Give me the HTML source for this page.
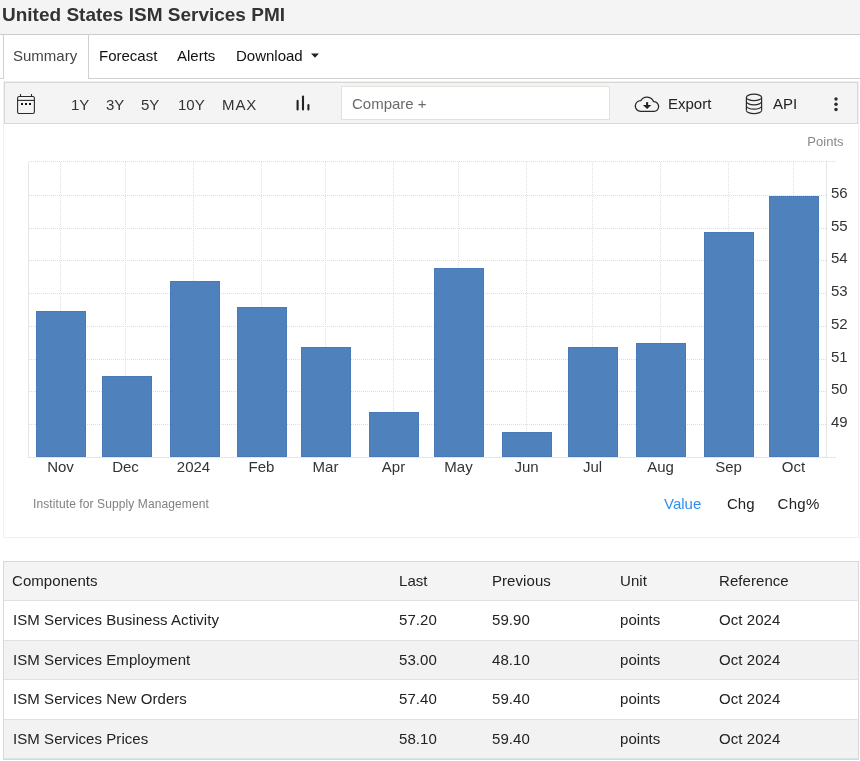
<!DOCTYPE html>
<html><head><meta charset="utf-8">
<style>
*{box-sizing:border-box;margin:0;padding:0}
html,body{width:860px;height:761px;overflow:hidden;background:#fff;-webkit-font-smoothing:antialiased;font-family:"Liberation Sans",sans-serif;color:#222}
.a{position:absolute;white-space:nowrap;line-height:normal;will-change:transform}
#hdr{position:absolute;left:0;top:0;width:860px;height:35px;background:#f4f4f4;border-bottom:1px solid #cccccc}
#title{left:2px;top:4px;font-size:19px;font-weight:bold;color:#333}
#tabline{position:absolute;left:0;top:78px;width:860px;height:1px;background:#d0d0d0}
#tabsum{position:absolute;left:3px;top:35px;width:86px;height:44px;background:#fff;border-left:1px solid #d0d0d0;border-right:1px solid #d0d0d0}
.tab{font-size:15px;top:46.5px;color:#111}
#tb{position:absolute;left:4px;top:82px;width:854px;height:42px;background:#f4f4f4;border:1px solid #d8d8d8}
.tbt{font-size:15px;top:95.5px;color:#333}
#cmp{position:absolute;left:341px;top:86px;width:269px;height:34px;background:#fff;border:1px solid #e2e2da}
#chartbox{position:absolute;left:3px;top:81px;width:856px;height:457px;border:1px solid #f0f0f0}
#tbl{position:absolute;left:3px;top:561px;width:856px;height:199px;border:1px solid #d7d7d7}
.row{position:absolute;left:0;width:854px;border-bottom:1px solid #dde2e6}
.td{font-size:15px;color:#222}
</style></head><body>
<div id="hdr"></div>
<div class="a" id="title">United States ISM Services PMI</div>
<div id="tabline"></div>
<div id="tabsum"></div>
<div class="a tab" style="left:13px;color:#444">Summary</div>
<div class="a tab" style="left:99px">Forecast</div>
<div class="a tab" style="left:177px">Alerts</div>
<div class="a tab" style="left:236px">Download</div>
<svg class="a" style="left:310px;top:52px" width="10" height="7"><path d="M1 1.5 L9 1.5 L5 5.8 Z" fill="#222"/></svg>

<div id="chartbox"></div>
<div id="tb"></div>
<svg class="a" style="left:10px;top:88px" width="32" height="32" viewBox="0 0 32 32">
 <rect x="7.6" y="8.5" width="16.8" height="17" rx="1.6" fill="none" stroke="#2a2a2a" stroke-width="1.1"/>
 <line x1="7.6" y1="12.4" x2="24.4" y2="12.4" stroke="#2a2a2a" stroke-width="1.1"/>
 <line x1="10.5" y1="6" x2="10.5" y2="8.5" stroke="#2a2a2a" stroke-width="1.1"/>
 <line x1="21.5" y1="6" x2="21.5" y2="8.5" stroke="#2a2a2a" stroke-width="1.1"/>
 <rect x="11" y="15" width="2" height="2" fill="#111"/>
 <rect x="15" y="15" width="2" height="2" fill="#111"/>
 <rect x="19" y="15" width="2" height="2" fill="#111"/>
</svg>
<div class="a tbt" style="left:71px">1Y</div>
<div class="a tbt" style="left:106px">3Y</div>
<div class="a tbt" style="left:141px">5Y</div>
<div class="a tbt" style="left:178px">10Y</div>
<div class="a tbt" style="left:222px;letter-spacing:0.9px">MAX</div>
<svg class="a" style="left:290px;top:90px" width="26" height="26" viewBox="0 0 26 26">
 <line x1="7.6" y1="10.9" x2="7.6" y2="19.5" stroke="#222" stroke-width="2.1" stroke-linecap="round"/>
 <line x1="13" y1="6.5" x2="13" y2="19.5" stroke="#222" stroke-width="2.1" stroke-linecap="round"/>
 <line x1="18.4" y1="15" x2="18.4" y2="19.5" stroke="#222" stroke-width="2.1" stroke-linecap="round"/>
</svg>
<div id="cmp"></div>
<div class="a tbt" style="left:352px;top:94.5px;color:#6a6a6a">Compare +</div>
<svg class="a" style="left:630px;top:88px" width="34" height="30" viewBox="0 0 34 30">
 <path d="M10.6 23.4 A5.4 5.4 0 0 1 10.8 12.6 A7.1 7.1 0 0 1 23.6 13.7 A4.85 4.85 0 0 1 24 23.4 Z" fill="none" stroke="#2a2a2a" stroke-width="1.3" stroke-linejoin="round"/>
 <rect x="16.1" y="14.1" width="2" height="3.8" fill="#222"/>
 <path d="M12.9 16.9 L21.3 16.9 L17.1 21 Z" fill="#222"/>
</svg>
<div class="a tbt" style="left:668px;top:95px;color:#222">Export</div>
<svg class="a" style="left:738px;top:88px" width="30" height="30" viewBox="0 0 30 30">
 <g fill="none" stroke="#2a2a2a" stroke-width="1.2">
 <ellipse cx="16" cy="9.4" rx="7.6" ry="3.2"/>
 <path d="M8.4 9.4 V22.4 M23.6 9.4 V22.4"/>
 <path d="M8.4 13.6 A7.6 3.2 0 0 0 23.6 13.6"/>
 <path d="M8.4 18 A7.6 3.2 0 0 0 23.6 18"/>
 <path d="M8.4 22.4 A7.6 3.2 0 0 0 23.6 22.4"/>
 </g>
</svg>
<div class="a tbt" style="left:772.5px;top:95px;color:#222">API</div>
<svg class="a" style="left:830px;top:94px" width="12" height="20"><circle cx="6" cy="5" r="1.75" fill="#2d2d2d"/><circle cx="6" cy="10.2" r="1.75" fill="#2d2d2d"/><circle cx="6" cy="15.4" r="1.75" fill="#2d2d2d"/></svg>

<svg class="a" style="left:0;top:0" width="860" height="540" viewBox="0 0 860 540" id="chart">
 <text x="843.5" y="145.6" font-size="13" fill="#888" text-anchor="end" font-family="Liberation Sans">Points</text>
 <g stroke="#dfdfdf" stroke-width="1" stroke-dasharray="1,1" shape-rendering="crispEdges" fill="none">
 <path d="M29 161.5 H827 M29 195.5 H827 M29 228.5 H827 M29 260.5 H827 M29 293.5 H827 M29 326.5 H827 M29 359.5 H827 M29 391.5 H827 M29 424.5 H827"/>
 <path d="M60.5 162 V457 M125.5 162 V457 M193.5 162 V457 M261.5 162 V457 M325.5 162 V457 M393.5 162 V457 M458.5 162 V457 M526.5 162 V457 M592.5 162 V457 M660.5 162 V457 M728.5 162 V457 M793.5 162 V457"/>
 </g>
 <g stroke="#e6e6e6" stroke-width="1" shape-rendering="crispEdges" fill="none">
  <path d="M28.5 162 V457.5"/>
  <path d="M826.5 161 V457.5"/>
  <path d="M827 161.5 H836" stroke="#eeeeee"/>
  <path d="M28 457.5 H836"/>
 </g>
 <g fill="#4f81bd" stroke="#487ab9" stroke-width="1" shape-rendering="crispEdges">
 <rect x="36.5" y="311.5" width="49" height="145"/>
 <rect x="102.5" y="376.5" width="49" height="80"/>
 <rect x="170.5" y="281.5" width="49" height="175"/>
 <rect x="237.5" y="307.5" width="49" height="149"/>
 <rect x="301.5" y="347.5" width="49" height="109"/>
 <rect x="369.5" y="412.5" width="49" height="44"/>
 <rect x="434.5" y="268.5" width="49" height="188"/>
 <rect x="502.5" y="432.5" width="49" height="24"/>
 <rect x="568.5" y="347.5" width="49" height="109"/>
 <rect x="636.5" y="343.5" width="49" height="113"/>
 <rect x="704.5" y="232.5" width="49" height="224"/>
 <rect x="769.5" y="196.5" width="49" height="260"/>
 </g>
 <g font-size="15" fill="#333" font-family="Liberation Sans">
 <text x="831" y="198">56</text>
 <text x="831" y="231">55</text>
 <text x="831" y="263">54</text>
 <text x="831" y="296">53</text>
 <text x="831" y="329">52</text>
 <text x="831" y="362">51</text>
 <text x="831" y="394">50</text>
 <text x="831" y="427">49</text>
 </g>
 <g font-size="15" fill="#333" font-family="Liberation Sans" text-anchor="middle">
 <text x="60.5" y="471.7">Nov</text>
 <text x="125.5" y="471.7">Dec</text>
 <text x="193.5" y="471.7">2024</text>
 <text x="261.5" y="471.7">Feb</text>
 <text x="325.5" y="471.7">Mar</text>
 <text x="393.5" y="471.7">Apr</text>
 <text x="458.5" y="471.7">May</text>
 <text x="526.5" y="471.7">Jun</text>
 <text x="592.5" y="471.7">Jul</text>
 <text x="660.5" y="471.7">Aug</text>
 <text x="728.5" y="471.7">Sep</text>
 <text x="793.5" y="471.7">Oct</text>
 </g>
 <text x="33" y="507.8" font-size="12" fill="#808080" font-family="Liberation Sans" letter-spacing="0.1">Institute for Supply Management</text>
 <g font-size="15" font-family="Liberation Sans">
  <text x="664" y="509.3" fill="#2f8fee">Value</text>
  <text x="727" y="509.3" fill="#222">Chg</text>
  <text x="777.5" y="509.3" fill="#222" letter-spacing="0.3">Chg%</text>
 </g>
</svg>

<div id="tbl">
 <div class="row" style="top:0;height:39px;background:#f4f4f4"></div>
 <div class="row" style="top:39px;height:40px;background:#fff"></div>
 <div class="row" style="top:79px;height:39px;background:#f2f2f2"></div>
 <div class="row" style="top:118px;height:40px;background:#fff"></div>
 <div class="row" style="top:158px;height:39px;background:#f2f2f2"></div>
</div>
<svg class="a" style="left:0;top:540px" width="860" height="221" viewBox="0 540 860 221">
 <g font-size="15" fill="#222" font-family="Liberation Sans" letter-spacing="0.06">
  <text x="12" y="585.9">Components</text><text x="399" y="585.9">Last</text><text x="492" y="585.9">Previous</text><text x="620" y="585.9">Unit</text><text x="719" y="585.9">Reference</text>
  <text x="13" y="624.5">ISM Services Business Activity</text><text x="399" y="624.5">57.20</text><text x="492" y="624.5">59.90</text><text x="620" y="624.5">points</text><text x="719" y="624.5">Oct 2024</text>
  <text x="13" y="664.6">ISM Services Employment</text><text x="399" y="664.6">53.00</text><text x="492" y="664.6">48.10</text><text x="620" y="664.6">points</text><text x="719" y="664.6">Oct 2024</text>
  <text x="13" y="704.1">ISM Services New Orders</text><text x="399" y="704.1">57.40</text><text x="492" y="704.1">59.40</text><text x="620" y="704.1">points</text><text x="719" y="704.1">Oct 2024</text>
  <text x="13" y="743.7">ISM Services Prices</text><text x="399" y="743.7">58.10</text><text x="492" y="743.7">59.40</text><text x="620" y="743.7">points</text><text x="719" y="743.7">Oct 2024</text>
 </g>
</svg>
</body></html>
